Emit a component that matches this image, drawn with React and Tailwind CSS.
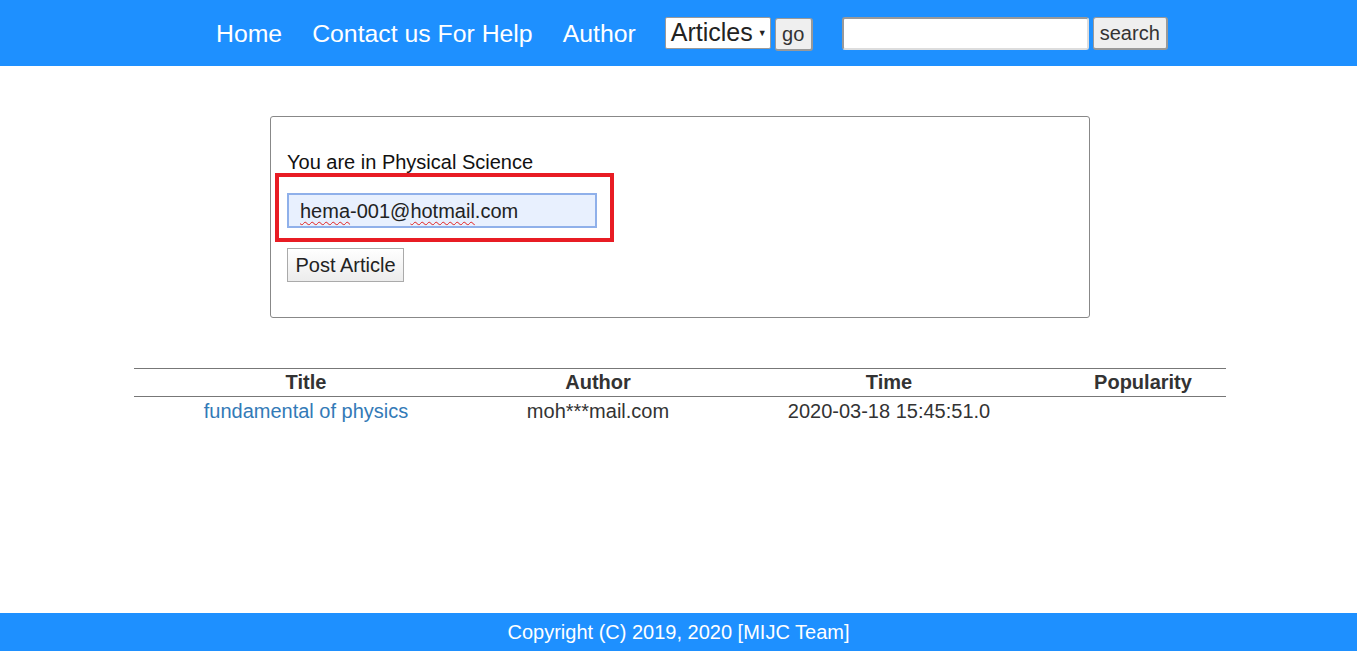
import React from 'react';

const font = { fontFamily: '"Liberation Sans", Arial, sans-serif' };

const App = () => {
  return (
    <div className="h-screen flex flex-col bg-white" style={font}>
      {/* Header */}
      <header className="h-[66px] bg-[#1e90ff] flex items-center pl-[216px] shrink-0">
        <nav className="flex items-center gap-[30px] text-[24.8px] leading-[28px] text-white pt-[1px]">
          <a href="#">Home</a>
          <a href="#">Contact us For Help</a>
          <a href="#">Author</a>
        </nav>
        <div className="ml-[29px] flex items-center gap-[4px]">
          <div className="h-[32px] w-[106px] bg-white border border-[#999] rounded-[2px] flex items-center pl-[5px] text-[25px] text-[#222]">
            Articles
            <span className="ml-[5px] text-[9px] leading-none">▼</span>
          </div>
          <button className="h-[33px] w-[38px] mt-[2px] bg-[#efefef] border border-[#999] border-b-2 border-r-2 rounded-[3px] text-[20px] text-[#333] flex items-center justify-center">
            go
          </button>
        </div>
        <div className="ml-[29px] flex items-center gap-[4px]">
          <input className="h-[33px] w-[247px] bg-white border-2 border-[#999] border-b-[#ddd] border-r-[#ddd] rounded-[3px] outline-none" />
          <button className="h-[33px] w-[75px] bg-[#efefef] border border-[#999] border-b-2 border-r-2 rounded-[3px] text-[20px] text-[#333] flex items-center justify-center">
            search
          </button>
        </div>
      </header>

      <main className="flex-1">
        {/* Post box */}
        <section className="ml-[270px] mt-[50px] w-[820px] border border-[#888] rounded-[3px] pt-[34px] pb-[35px] px-[16px]">
          <p className="text-[20px] leading-[23px] text-[#111]">You are in Physical Science</p>
          <div className="relative mt-[19px] w-[310px]">
            <div className="h-[35px] w-[310px] bg-[#e8f0fe] border-2 border-[#8fb0ea] pl-[11px] text-[20px] text-[#222] flex items-center">
              <span className="underline decoration-wavy decoration-[#e02020] decoration-1 underline-offset-[3px]">hema</span>
              -001@
              <span className="underline decoration-wavy decoration-[#e02020] decoration-1 underline-offset-[3px]">hotmail</span>
              .com
            </div>
            <div className="absolute left-[-12px] top-[-20px] w-[339px] h-[69px] border-4 border-[#e81c24] pointer-events-none" />
          </div>
          <button className="mt-[20px] h-[34px] w-[117px] bg-gradient-to-b from-white to-[#ececec] border border-[#aaa] text-[20px] text-[#222] flex items-center justify-center">
            Post Article
          </button>
        </section>

        {/* Articles table */}
        <table className="ml-[134px] mt-[50px] w-[1092px] table-fixed border-collapse text-[20px] leading-[23px]">
          <thead>
            <tr className="border-t border-b border-[#777]">
              <th className="w-[344px] h-[28px] p-0 font-bold text-[#333]">Title</th>
              <th className="w-[240px] p-0 font-bold text-[#333]">Author</th>
              <th className="w-[342px] p-0 font-bold text-[#333]">Time</th>
              <th className="w-[166px] p-0 font-bold text-[#333]">Popularity</th>
            </tr>
          </thead>
          <tbody>
            <tr>
              <td className="h-[29px] p-0 text-center">
                <a href="#" className="text-[#337ab7]">fundamental of physics</a>
              </td>
              <td className="p-0 text-center text-[#333]">moh***mail.com</td>
              <td className="p-0 text-center text-[#333]">2020-03-18 15:45:51.0</td>
              <td className="p-0"></td>
            </tr>
          </tbody>
        </table>
      </main>

      {/* Footer */}
      <footer className="h-[38px] bg-[#1e90ff] flex items-center justify-center text-white text-[20px] shrink-0">
        Copyright (C) 2019, 2020 [MIJC Team]
      </footer>
    </div>
  );
};

export default App;
